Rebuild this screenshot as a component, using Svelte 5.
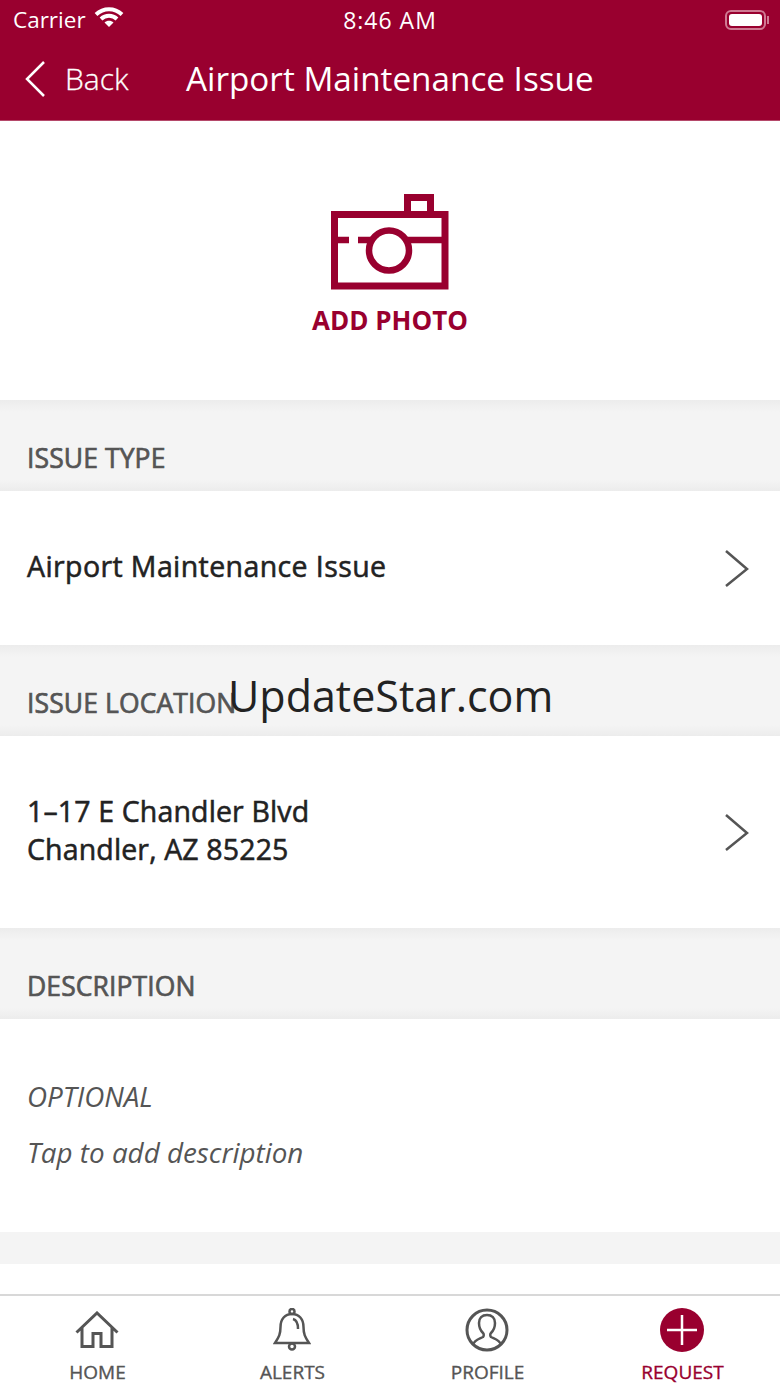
<script lang="ts">
	const tabs = [
		{ id: 'home', label: 'HOME' },
		{ id: 'alerts', label: 'ALERTS' },
		{ id: 'profile', label: 'PROFILE' },
		{ id: 'request', label: 'REQUEST' }
	];
</script>

<div class="screen">
	<header class="top">
		<div class="status">
			<div class="carrier">
				<span>Carrier</span>
				<svg width="30" height="22" viewBox="0 0 30 22" aria-hidden="true">
					<path d="M2 8.500C9.500 1.500 20.500 1.500 28 8.500" class="wifi" />
					<path d="M7 13C11.500 8.800 18.500 8.800 23 13" class="wifi" />
					<path d="M15 21L10.500 16.500C13 14.300 17 14.300 19.500 16.500Z" fill="#fff" />
				</svg>
			</div>
			<span class="time">8:46 AM</span>
			<div class="battery"><i></i></div>
		</div>
		<nav class="bar">
			<div class="back">
				<svg width="22" height="36" viewBox="0 0 22 36" aria-hidden="true">
					<path d="M19 1L2 18l17 17" fill="none" stroke="#fff" stroke-width="2.500" />
				</svg>
				<span>Back</span>
			</div>
			<h1>Airport Maintenance Issue</h1>
		</nav>
	</header>

	<section class="photo">
		<svg width="118" height="96" viewBox="0 0 118 96" aria-hidden="true">
			<g fill="none" stroke="#99002f" stroke-width="7">
				<path d="M3.500 20.500H114V92H3.500Z" />
				<path d="M76.500 18V3.500H99.500V18" />
			</g>
			<g fill="none" stroke="#99002f" stroke-width="6.500">
				<path d="M3.500 46H18M27 46H42M76 46H114" />
				<circle cx="58" cy="56.500" r="20" />
			</g>
		</svg>
		<strong>ADD PHOTO</strong>
	</section>

	<div class="label"><span>ISSUE TYPE</span></div>
	<div class="row type">
		<p>Airport Maintenance Issue</p>
		<svg class="chev" width="26" height="38" viewBox="0 0 26 38" aria-hidden="true">
			<path d="M2 2l21 18L2 37" />
		</svg>
	</div>

	<div class="label"><span>ISSUE LOCATION</span></div>
	<div class="row location">
		<p>1–17 E Chandler Blvd<br />Chandler, AZ 85225</p>
		<svg class="chev" width="26" height="38" viewBox="0 0 26 38" aria-hidden="true">
			<path d="M2 2l21 18L2 37" />
		</svg>
	</div>

	<div class="label"><span>DESCRIPTION</span></div>
	<div class="desc">
		<p>OPTIONAL</p>
		<p>Tap to add description</p>
	</div>

	<div class="spacer"></div>
	<div class="gap"></div>

	<footer class="tabs">
		{#each tabs as tab}
			<div class="tab" class:active={tab.id === 'request'}>
				<div class="icon">
					{#if tab.id === 'home'}
						<svg width="44" height="38" viewBox="0 0 44 38">
							<path d="M1.500 21.500L22 2l20.500 19.500M7 17v18.500h11V22.500h8v13h11V17" class="ico" />
						</svg>
					{:else if tab.id === 'alerts'}
						<svg width="38" height="44" viewBox="0 0 38 44">
							<path d="M2 35h34c-4-6-5.500-9-5.500-16C30.500 11 26 6 19 6S7.500 11 7.500 19C7.500 26 6 29 2 35Z" class="ico thin" />
							<circle cx="19" cy="3.500" r="2.500" class="ico thin" />
							<circle cx="19" cy="38.500" r="3" class="ico thin" />
							<path d="M20 11c4 1 5 5 5 10" class="ico thin" />
						</svg>
					{:else if tab.id === 'profile'}
						<svg width="44" height="44" viewBox="0 0 44 44">
							<circle cx="22" cy="22" r="20" class="ico" />
							<path d="M8 37c1-5 6-6 10-8 1-1 1-3 0-4-3-3-4-6-4-10 0-5 3-8 8-8s8 3 8 8c0 4-1 7-4 10-1 1-1 3 0 4 4 2 9 3 10 8" class="ico thin" />
						</svg>
					{:else}
						<svg width="44" height="44" viewBox="0 0 44 44">
							<circle cx="22" cy="22" r="22" fill="#99002f" />
							<path d="M22 7v30M7 22h30" stroke="#fff" stroke-width="2.500" />
						</svg>
					{/if}
				</div>
				<span>{tab.label}</span>
			</div>
		{/each}
	</footer>

	<div class="watermark">UpdateStar.com</div>
</div>

<style>
	:global(body) {
		margin: 0;
		background: #fff;
		font-family: 'Open Sans', sans-serif;
	}

	.screen {
		position: relative;
		width: 780px;
		height: 1387px;
		overflow: hidden;
		display: flex;
		flex-direction: column;
	}

	.top {
		background: #99002f;
		color: #fff;
		height: 121px;
		box-sizing: border-box;
		border-bottom: 1px solid #b5496a;
	}

	.status {
		position: relative;
		height: 39px;
		padding: 0 14px 1px 13px;
		display: flex;
		align-items: center;
		justify-content: space-between;
		font-size: 22.500px;
	}

	.carrier {
		display: flex;
		align-items: center;
		gap: 8px;
	}

	.carrier svg {
		margin-top: -6px;
	}

	.wifi {
		fill: none;
		stroke: #fff;
		stroke-width: 4;
	}

	.time {
		position: absolute;
		left: 0;
		right: 0;
		text-align: center;
		font-size: 23px;
		letter-spacing: 1px;
	}

	.battery {
		position: relative;
		width: 41px;
		height: 20px;
		box-sizing: border-box;
		border: 2px solid #cf7a93;
		border-radius: 6px;
		padding: 2px;
	}

	.battery::after {
		content: '';
		position: absolute;
		right: -5px;
		top: 4px;
		width: 2px;
		height: 8px;
		background: #cf7a93;
	}

	.battery i {
		display: block;
		height: 100%;
		background: #fff;
		border-radius: 3px;
	}

	.bar {
		display: flex;
		align-items: center;
		height: 76px;
		padding-left: 25px;
	}

	.back {
		display: flex;
		align-items: center;
		gap: 18px;
		width: 161px;
		font-size: 30px;
		font-weight: 300;
		-webkit-text-stroke: 0.3px #fff;
	}

	.back svg {
		margin-top: 2px;
	}

	h1 {
		margin: 0;
		font-size: 33.250px;
		font-weight: 400;
		white-space: nowrap;
	}

	.photo {
		height: 279px;
		box-sizing: border-box;
		padding-top: 73px;
		display: flex;
		flex-direction: column;
		align-items: center;
		gap: 12px;
		color: #99002f;
		font-size: 26px;
	}

	.photo strong {
		font-weight: 700;
		line-height: 36px;
	}

	.label {
		height: 91px;
		box-sizing: border-box;
		padding: 0 27px 15px;
		display: flex;
		align-items: flex-end;
		background: linear-gradient(#ececec, #f4f4f4 12px, #f4f4f4 80px, #ececec);
		color: #555;
		font-size: 26.500px;
		font-weight: 400;
		-webkit-text-stroke: 0.7px #555;
		line-height: 36px;
		letter-spacing: 0.1px;
	}

	.row {
		display: flex;
		align-items: center;
		justify-content: space-between;
		padding: 0 30px 0 27px;
		font-size: 28.500px;
		font-weight: 400;
		-webkit-text-stroke: 0.55px #222;
		line-height: 38px;
		letter-spacing: 0.4px;
		color: #222;
	}

	.row p {
		margin: -5px 0 0;
	}

	.desc p {
		margin: 0;
	}

	.type {
		height: 154px;
	}

	.location {
		height: 192px;
		letter-spacing: 0.14px;
	}

	.chev path {
		fill: none;
		stroke: #555;
		stroke-width: 2.500;
	}

	.desc {
		height: 213px;
		box-sizing: border-box;
		padding: 58px 27px 0;
		display: flex;
		flex-direction: column;
		gap: 18px;
		color: #555;
		font-size: 27.800px;
		font-style: italic;
		line-height: 38px;
	}

	.spacer {
		height: 32px;
		background: #f4f4f4;
	}

	.gap {
		height: 30px;
	}

	.tabs {
		flex: 1;
		display: grid;
		grid-template-columns: repeat(4, 1fr);
		border-top: 2px solid #d8d8d8;
		box-sizing: border-box;
	}

	.tab {
		display: flex;
		flex-direction: column;
		align-items: center;
		padding-top: 11px;
		color: #555;
		font-size: 19px;
		font-weight: 400;
		-webkit-text-stroke: 0.35px currentColor;
	}

	.tab.active {
		color: #99002f;
	}

	.icon {
		height: 46px;
		margin-right: 2px;
		display: flex;
		align-items: center;
		justify-content: center;
	}

	.ico {
		fill: none;
		stroke: #555;
		stroke-width: 3;
	}

	.ico.thin {
		stroke-width: 2.500;
	}

	.tab span {
		line-height: 28px;
		margin-top: 5px;
	}

	.watermark {
		position: absolute;
		left: 228px;
		top: 666px;
		font-size: 43px;
		line-height: 60px;
		color: #222;
		white-space: nowrap;
	}
</style>
